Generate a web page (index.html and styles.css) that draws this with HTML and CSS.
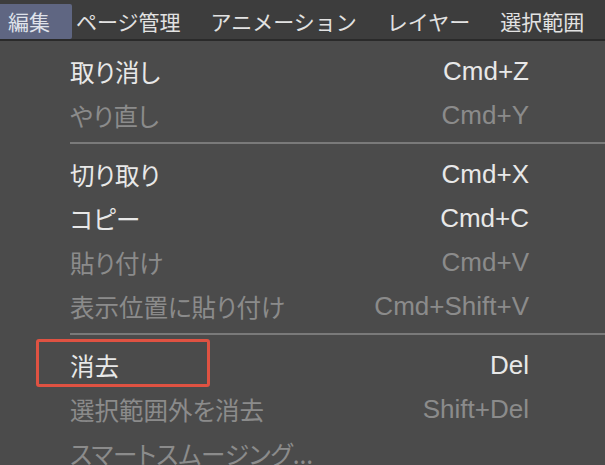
FILE: index.html
```html
<!DOCTYPE html>
<html lang="ja">
<head>
<meta charset="utf-8">
<link rel="stylesheet" href="styles.css">
</head>
<body>
<div class="menubar">
  <div class="m-item active">編集</div>
  <div class="m-item">ページ管理</div>
  <div class="m-item">アニメーション</div>
  <div class="m-item">レイヤー</div>
  <div class="m-item">選択範囲</div>
</div>
<div class="menu">
  <div class="row"><span class="label">取り消し</span><span class="key">Cmd+Z</span></div>
  <div class="row disabled"><span class="label">やり直し</span><span class="key">Cmd+Y</span></div>
  <div class="sep"></div>
  <div class="row"><span class="label">切り取り</span><span class="key">Cmd+X</span></div>
  <div class="row"><span class="label">コピー</span><span class="key">Cmd+C</span></div>
  <div class="row disabled"><span class="label">貼り付け</span><span class="key">Cmd+V</span></div>
  <div class="row disabled"><span class="label">表示位置に貼り付け</span><span class="key">Cmd+Shift+V</span></div>
  <div class="sep"></div>
  <div class="row marked"><span class="label">消去</span><span class="key">Del</span></div>
  <div class="row disabled"><span class="label">選択範囲外を消去</span><span class="key">Shift+Del</span></div>
  <div class="row disabled"><span class="label">スマートスムージング...</span><span class="key"></span></div>
</div>
</body>
</html>
```
FILE: styles.css
```css
html, body {
  margin: 0;
  padding: 0;
  background: #4b4b4b;
  overflow: hidden;
}
body {
  width: 605px;
  height: 465px;
  font-family: "Noto Sans CJK JP", "Liberation Sans", sans-serif;
}
.menubar {
  display: flex;
  align-items: flex-start;
  height: 39px;
  background: #3d3d3d;
  border-bottom: 2px solid #2a2a2a;
  white-space: nowrap;
  overflow: hidden;
}
.m-item {
  flex-shrink: 0;
  margin-top: 4px;
  height: 35px;
  line-height: 35px;
  padding: 0 15px;
  font-size: 21px;
  color: #e2e2e2;
}
.m-item.active {
  background: #5f6682;
  width: 72px;
  box-sizing: border-box;
  padding: 0 0 0 8px;
  color: #dfe2ea;
  border-radius: 0 2px 2px 0;
}
.m-item.active + .m-item {
  padding-left: 4px;
}
.menu {
  padding-top: 8px;
}
.row {
  position: relative;
  display: flex;
  align-items: center;
  justify-content: space-between;
  height: 44px;
  padding: 0 76px 0 70px;
  color: #e8e8e8;
}
.row.disabled {
  color: #8b8b8b;
}
.label {
  font-size: 24.5px;
  font-feature-settings: "palt";
}
.key {
  font-family: "Liberation Sans", Arial, sans-serif;
  font-size: 26px;
}
.sep {
  height: 2px;
  background: #7a7a7a;
  margin: 5px 0 8px 70px;
}
.row.marked::before {
  content: "";
  position: absolute;
  left: 36px;
  top: -4px;
  width: 174px;
  height: 48px;
  box-sizing: border-box;
  border: 3px solid #df5242;
  border-radius: 3px;
}
```
